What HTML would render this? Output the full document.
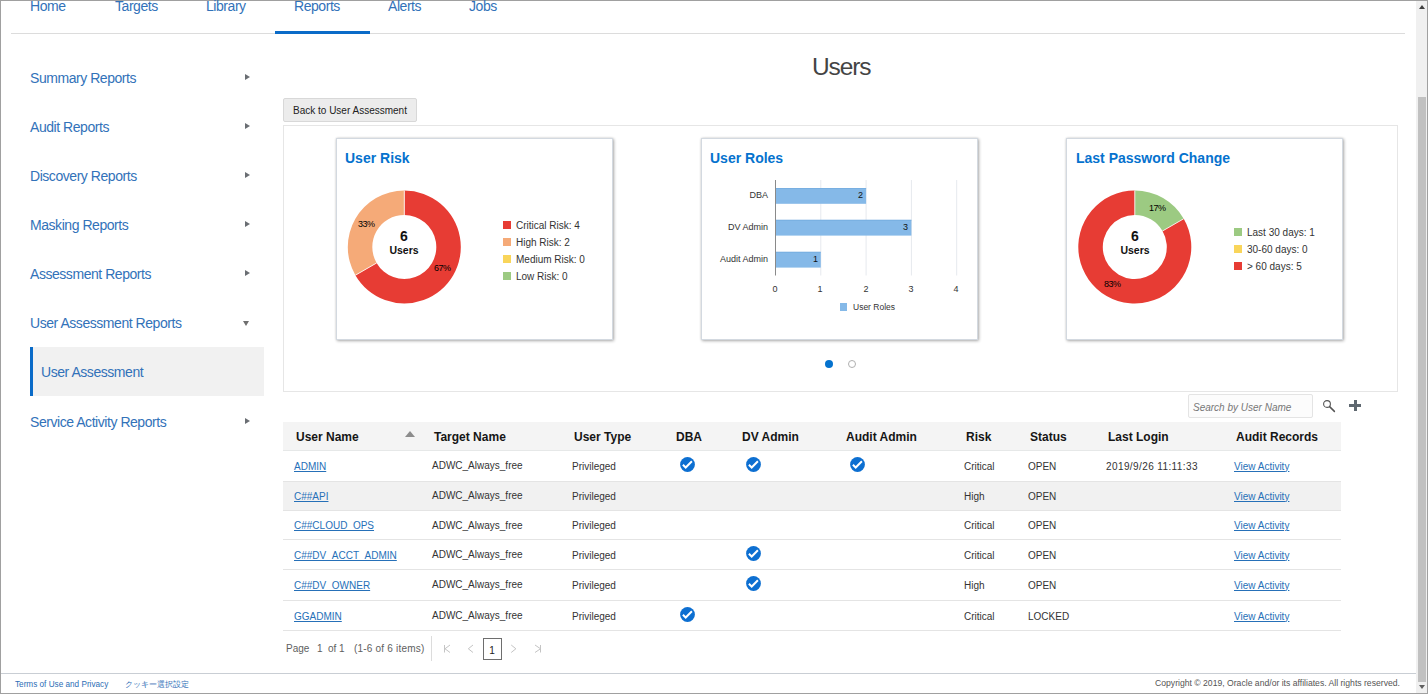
<!DOCTYPE html>
<html><head><meta charset="utf-8"><title>Users</title>
<style>
html,body{margin:0;padding:0;}
body{width:1428px;height:694px;position:relative;overflow:hidden;background:#fff;font-family:"Liberation Sans",sans-serif;color:#333;}
.a{position:absolute;white-space:nowrap;line-height:1;}
.tab{font-size:14px;letter-spacing:-0.45px;color:#3272b9;top:-1px;}
.nav{font-size:14px;letter-spacing:-0.45px;color:#3272b9;left:30px;}
.arr{position:absolute;left:245px;width:0;height:0;border-top:3.5px solid transparent;border-bottom:3.5px solid transparent;border-left:5px solid #6a6e73;}
.card{position:absolute;top:138px;width:275px;height:200px;border:1px solid #d3d9e0;background:#fff;box-shadow:0 0 2px rgba(0,0,0,0.12),1px 1px 3px rgba(0,0,0,0.3);}
.ctitle{font-size:14px;font-weight:bold;color:#0572ce;}
.leg{font-size:10px;color:#333;}
.sq{position:absolute;width:8px;height:8px;}
.th{font-size:12px;font-weight:bold;color:#161616;}
.td{font-size:10px;color:#333;}
.lnk{color:#2670b8;text-decoration:underline;}
.pg{font-size:10px;color:#606060;}
</style></head><body>
<!-- frame -->
<div class="a" style="left:0;top:0;width:1428px;height:1px;background:#a0a0a0"></div>
<div class="a" style="left:0;top:0;width:1px;height:694px;background:#a0a0a0"></div>
<div class="a" style="left:0;top:693px;width:1428px;height:1px;background:#a0a0a0"></div>
<div class="a" style="left:1427px;top:0;width:1px;height:694px;background:#a0a0a0"></div>
<!-- scrollbar -->
<div class="a" style="left:1416px;top:1px;width:11px;height:692px;background:#f0f0f0"></div>
<div class="a" style="left:1418px;top:97px;width:8px;height:585px;background:#c1c1c1"></div>
<div class="a" style="left:1419px;top:5px;width:0;height:0;border-left:3px solid transparent;border-right:3px solid transparent;border-bottom:4px solid #404040"></div>
<div class="a" style="left:1419px;top:685px;width:0;height:0;border-left:3px solid transparent;border-right:3px solid transparent;border-top:4px solid #606060"></div>

<!-- tabs -->
<div class="a tab" style="left:30px">Home</div>
<div class="a tab" style="left:115px">Targets</div>
<div class="a tab" style="left:206px">Library</div>
<div class="a tab" style="left:294px">Reports</div>
<div class="a tab" style="left:388px">Alerts</div>
<div class="a tab" style="left:469px">Jobs</div>
<div class="a" style="left:11px;top:33px;width:1394px;height:1px;background:#dcdcdc"></div>
<div class="a" style="left:275px;top:31px;width:95px;height:3px;background:#0a6bc8"></div>

<!-- left nav -->
<div class="a nav" style="top:71px">Summary Reports</div><div class="arr" style="top:74px"></div>
<div class="a nav" style="top:120px">Audit Reports</div><div class="arr" style="top:123px"></div>
<div class="a nav" style="top:169px">Discovery Reports</div><div class="arr" style="top:172px"></div>
<div class="a nav" style="top:218px">Masking Reports</div><div class="arr" style="top:221px"></div>
<div class="a nav" style="top:267px">Assessment Reports</div><div class="arr" style="top:270px"></div>
<div class="a nav" style="top:316px">User Assessment Reports</div><div class="a" style="left:243px;top:321px;width:0;height:0;border-left:3.5px solid transparent;border-right:3.5px solid transparent;border-top:5px solid #6f6f6f"></div>
<div class="a" style="left:30px;top:347px;width:234px;height:49px;background:#f1f1f1"></div>
<div class="a" style="left:30px;top:347px;width:3px;height:49px;background:#0a6bc8"></div>
<div class="a nav" style="top:365px;left:41px">User Assessment</div>
<div class="a nav" style="top:415px">Service Activity Reports</div><div class="arr" style="top:418px"></div>

<!-- title -->
<div class="a" style="left:812px;top:55px;font-size:24.5px;letter-spacing:-1.1px;color:#444">Users</div>

<!-- button -->
<div class="a" style="left:283px;top:98px;width:132px;height:22px;border:1px solid #d8d8d8;border-radius:2px;background:#ececec"></div>
<div class="a" style="left:293px;top:106px;font-size:10px;color:#222">Back to User Assessment</div>

<!-- panel -->
<div class="a" style="left:283px;top:125px;width:1113px;height:265px;border:1px solid #e6e6e6"></div>

<!-- cards -->
<div class="card" style="left:336px"></div>
<div class="card" style="left:701px"></div>
<div class="card" style="left:1066px"></div>
<div class="a ctitle" style="left:345px;top:151px">User Risk</div>
<div class="a ctitle" style="left:710px;top:151px">User Roles</div>
<div class="a ctitle" style="left:1076px;top:151px">Last Password Change</div>

<!--CHARTS-->
<svg class="a" style="left:0;top:0" width="1428" height="694" viewBox="0 0 1428 694"><path d="M404.30 190.50A56.5 56.5 0 1 1 355.37 275.25L376.59 263.00A32.0 32.0 0 1 0 404.30 215.00Z" fill="#e73c34"/><path d="M355.37 275.25A56.5 56.5 0 0 1 404.30 190.50L404.30 215.00A32.0 32.0 0 0 0 376.59 263.00Z" fill="#f5aa78"/><line x1="404.30" y1="190.50" x2="404.30" y2="215.00" stroke="#fff" stroke-width="0.8"/><line x1="355.37" y1="275.25" x2="376.59" y2="263.00" stroke="#fff" stroke-width="0.8"/><path d="M1134.80 190.50A56.5 56.5 0 0 1 1183.73 218.75L1162.51 231.00A32.0 32.0 0 0 0 1134.80 215.00Z" fill="#9cca82"/><path d="M1183.73 218.75A56.5 56.5 0 1 1 1134.80 190.50L1134.80 215.00A32.0 32.0 0 1 0 1162.51 231.00Z" fill="#e73c34"/><line x1="1134.80" y1="190.50" x2="1134.80" y2="215.00" stroke="#fff" stroke-width="0.8"/><line x1="1183.73" y1="218.75" x2="1162.51" y2="231.00" stroke="#fff" stroke-width="0.8"/><line x1="820.8" y1="180" x2="820.8" y2="275.5" stroke="#e6e9ee" stroke-width="1"/><line x1="866.1" y1="180" x2="866.1" y2="275.5" stroke="#e6e9ee" stroke-width="1"/><line x1="911.4" y1="180" x2="911.4" y2="275.5" stroke="#e6e9ee" stroke-width="1"/><line x1="956.7" y1="180" x2="956.7" y2="275.5" stroke="#e6e9ee" stroke-width="1"/><rect x="775.5" y="188" width="90.6" height="15.8" fill="#85b9e8"/><rect x="775.5" y="188" width="90.6" height="1" fill="#6fa8dc" opacity="0.6"/><rect x="775.5" y="219.8" width="135.9" height="15.8" fill="#85b9e8"/><rect x="775.5" y="219.8" width="135.9" height="1" fill="#6fa8dc" opacity="0.6"/><rect x="775.5" y="251.8" width="45.3" height="15.8" fill="#85b9e8"/><rect x="775.5" y="251.8" width="45.3" height="1" fill="#6fa8dc" opacity="0.6"/><line x1="775.5" y1="180" x2="775.5" y2="275.5" stroke="#8a8a8a" stroke-width="1"/></svg>
<!-- donut 1 text -->
<div class="a" style="left:374px;top:229px;width:60px;text-align:center;font-size:14px;font-weight:bold;color:#111">6</div>
<div class="a" style="left:374px;top:245px;width:60px;text-align:center;font-size:10.5px;font-weight:bold;color:#111">Users</div>
<div class="a" style="left:358px;top:220px;font-size:9px;color:#000;letter-spacing:-0.5px">33%</div>
<div class="a" style="left:434px;top:264px;font-size:9px;color:#000;letter-spacing:-0.5px">67%</div>
<div class="sq" style="left:503px;top:221px;background:#e73c34"></div>
<div class="sq" style="left:503px;top:238px;background:#f5aa78"></div>
<div class="sq" style="left:503px;top:255px;background:#f9d55a"></div>
<div class="sq" style="left:503px;top:272px;background:#9cca82"></div>
<div class="a leg" style="left:516px;top:220.5px">Critical Risk: 4</div>
<div class="a leg" style="left:516px;top:238px">High Risk: 2</div>
<div class="a leg" style="left:516px;top:255px">Medium Risk: 0</div>
<div class="a leg" style="left:516px;top:272px">Low Risk: 0</div>
<!-- donut 3 text -->
<div class="a" style="left:1105px;top:229px;width:60px;text-align:center;font-size:14px;font-weight:bold;color:#111">6</div>
<div class="a" style="left:1105px;top:245px;width:60px;text-align:center;font-size:10.5px;font-weight:bold;color:#111">Users</div>
<div class="a" style="left:1149px;top:204px;font-size:9px;color:#000;letter-spacing:-0.5px">17%</div>
<div class="a" style="left:1104px;top:280px;font-size:9px;color:#000;letter-spacing:-0.5px">83%</div>
<div class="sq" style="left:1234px;top:228px;background:#9cca82"></div>
<div class="sq" style="left:1234px;top:245px;background:#f9d55a"></div>
<div class="sq" style="left:1234px;top:262px;background:#e73c34"></div>
<div class="a leg" style="left:1247px;top:228px">Last 30 days: 1</div>
<div class="a leg" style="left:1247px;top:245px">30-60 days: 0</div>
<div class="a leg" style="left:1247px;top:262px">&gt; 60 days: 5</div>
<!-- bar chart text -->
<div class="a" style="left:700px;top:191px;width:68px;text-align:right;font-size:9px;color:#333">DBA</div>
<div class="a" style="left:700px;top:223px;width:68px;text-align:right;font-size:9px;color:#333">DV Admin</div>
<div class="a" style="left:700px;top:255px;width:68px;text-align:right;font-size:9px;color:#333">Audit Admin</div>
<div class="a" style="left:850px;top:191px;width:13px;text-align:right;font-size:9px;color:#111">2</div>
<div class="a" style="left:895px;top:223px;width:13px;text-align:right;font-size:9px;color:#111">3</div>
<div class="a" style="left:805px;top:255px;width:13px;text-align:right;font-size:9px;color:#111">1</div>
<div class="a" style="left:765px;top:285px;width:20px;text-align:center;font-size:9px;color:#333">0</div>
<div class="a" style="left:810px;top:285px;width:20px;text-align:center;font-size:9px;color:#333">1</div>
<div class="a" style="left:856px;top:285px;width:20px;text-align:center;font-size:9px;color:#333">2</div>
<div class="a" style="left:901px;top:285px;width:20px;text-align:center;font-size:9px;color:#333">3</div>
<div class="a" style="left:946px;top:285px;width:20px;text-align:center;font-size:9px;color:#333">4</div>
<div class="sq" style="left:840px;top:303px;width:7px;background:#85b9e8"></div>
<div class="a" style="left:853px;top:303px;font-size:8.5px;color:#333">User Roles</div>
<!--/CHARTS-->

<!-- dots -->
<div class="a" style="left:825px;top:360px;width:8px;height:8px;border-radius:50%;background:#0572ce"></div>
<div class="a" style="left:848px;top:360px;width:6px;height:6px;border-radius:50%;border:1px solid #b0b0b0"></div>

<!--TABLE-->
<div class="a" style="left:1188px;top:394px;width:123px;height:22px;border:1px solid #e4e4e4;border-radius:2px;background:#fcfcfc"></div>
<div class="a" style="left:1193px;top:403px;font-size:10px;font-style:italic;color:#777">Search by User Name</div>
<svg class="a" style="left:1320px;top:397px" width="18" height="18" viewBox="0 0 18 18"><circle cx="7" cy="7" r="3.4" fill="none" stroke="#555" stroke-width="1.1"/><line x1="9.6" y1="9.6" x2="14.4" y2="14.4" stroke="#555" stroke-width="1.5" stroke-linecap="round"/></svg>
<div class="a" style="left:1349px;top:404px;width:12px;height:3px;background:#5f6870"></div>
<div class="a" style="left:1354px;top:400px;width:3px;height:11px;background:#5f6870"></div>
<div class="a" style="left:283px;top:422px;width:1058px;height:28px;background:#f4f4f4"></div>
<div class="a" style="left:283px;top:450px;width:1058px;height:1px;background:#e6e8e8"></div>
<div class="a th" style="left:296px;top:431px">User Name</div>
<div class="a th" style="left:434px;top:431px">Target Name</div>
<div class="a th" style="left:574px;top:431px">User Type</div>
<div class="a th" style="left:676px;top:431px">DBA</div>
<div class="a th" style="left:742px;top:431px">DV Admin</div>
<div class="a th" style="left:846px;top:431px">Audit Admin</div>
<div class="a th" style="left:966px;top:431px">Risk</div>
<div class="a th" style="left:1030px;top:431px">Status</div>
<div class="a th" style="left:1108px;top:431px">Last Login</div>
<div class="a th" style="left:1236px;top:431px">Audit Records</div>
<div class="a" style="left:405px;top:431px;width:0;height:0;border-left:5px solid transparent;border-right:5px solid transparent;border-bottom:6px solid #8c8c8c"></div>
<div class="a" style="left:283px;top:481px;width:1058px;height:1px;background:#e4e4e4"></div>
<div class="a td lnk" style="left:294px;top:461.6px">ADMIN</div>
<div class="a td" style="left:432px;top:461.4px">ADWC_Always_free</div>
<div class="a td" style="left:572px;top:461.6px">Privileged</div>
<svg class="a" style="left:679.8px;top:456.5px" width="15" height="15" viewBox="0 0 15 15"><circle cx="7.5" cy="7.5" r="7.4" fill="#0d6fd1"/><path d="M2.9 7.7L5.7 10.5L11.9 4.3" fill="none" stroke="#fff" stroke-width="2"/></svg>
<svg class="a" style="left:745.8px;top:456.5px" width="15" height="15" viewBox="0 0 15 15"><circle cx="7.5" cy="7.5" r="7.4" fill="#0d6fd1"/><path d="M2.9 7.7L5.7 10.5L11.9 4.3" fill="none" stroke="#fff" stroke-width="2"/></svg>
<svg class="a" style="left:849.9px;top:456.5px" width="15" height="15" viewBox="0 0 15 15"><circle cx="7.5" cy="7.5" r="7.4" fill="#0d6fd1"/><path d="M2.9 7.7L5.7 10.5L11.9 4.3" fill="none" stroke="#fff" stroke-width="2"/></svg>
<div class="a td" style="left:964px;top:461.6px">Critical</div>
<div class="a td" style="left:1028px;top:461.6px">OPEN</div>
<div class="a td" style="left:1106px;top:461.6px;letter-spacing:0.4px">2019/9/26 11:11:33</div>
<div class="a td lnk" style="left:1234px;top:461.6px">View Activity</div>
<div class="a" style="left:283px;top:482px;width:1058px;height:28px;background:#f1f1f1"></div>
<div class="a" style="left:283px;top:510px;width:1058px;height:1px;background:#e4e4e4"></div>
<div class="a td lnk" style="left:294px;top:491.6px">C##API</div>
<div class="a td" style="left:432px;top:491.4px">ADWC_Always_free</div>
<div class="a td" style="left:572px;top:491.6px">Privileged</div>
<div class="a td" style="left:964px;top:491.6px">High</div>
<div class="a td" style="left:1028px;top:491.6px">OPEN</div>
<div class="a td lnk" style="left:1234px;top:491.6px">View Activity</div>
<div class="a" style="left:283px;top:539px;width:1058px;height:1px;background:#e4e4e4"></div>
<div class="a td lnk" style="left:294px;top:521.1px">C##CLOUD_OPS</div>
<div class="a td" style="left:432px;top:520.9px">ADWC_Always_free</div>
<div class="a td" style="left:572px;top:521.1px">Privileged</div>
<div class="a td" style="left:964px;top:521.1px">Critical</div>
<div class="a td" style="left:1028px;top:521.1px">OPEN</div>
<div class="a td lnk" style="left:1234px;top:521.1px">View Activity</div>
<div class="a" style="left:283px;top:569px;width:1058px;height:1px;background:#e4e4e4"></div>
<div class="a td lnk" style="left:294px;top:550.6px">C##DV_ACCT_ADMIN</div>
<div class="a td" style="left:432px;top:550.4px">ADWC_Always_free</div>
<div class="a td" style="left:572px;top:550.6px">Privileged</div>
<svg class="a" style="left:745.8px;top:545.5px" width="15" height="15" viewBox="0 0 15 15"><circle cx="7.5" cy="7.5" r="7.4" fill="#0d6fd1"/><path d="M2.9 7.7L5.7 10.5L11.9 4.3" fill="none" stroke="#fff" stroke-width="2"/></svg>
<div class="a td" style="left:964px;top:550.6px">Critical</div>
<div class="a td" style="left:1028px;top:550.6px">OPEN</div>
<div class="a td lnk" style="left:1234px;top:550.6px">View Activity</div>
<div class="a" style="left:283px;top:600px;width:1058px;height:1px;background:#e4e4e4"></div>
<div class="a td lnk" style="left:294px;top:580.6px">C##DV_OWNER</div>
<div class="a td" style="left:432px;top:580.4px">ADWC_Always_free</div>
<div class="a td" style="left:572px;top:580.6px">Privileged</div>
<svg class="a" style="left:745.8px;top:575.5px" width="15" height="15" viewBox="0 0 15 15"><circle cx="7.5" cy="7.5" r="7.4" fill="#0d6fd1"/><path d="M2.9 7.7L5.7 10.5L11.9 4.3" fill="none" stroke="#fff" stroke-width="2"/></svg>
<div class="a td" style="left:964px;top:580.6px">High</div>
<div class="a td" style="left:1028px;top:580.6px">OPEN</div>
<div class="a td lnk" style="left:1234px;top:580.6px">View Activity</div>
<div class="a" style="left:283px;top:630px;width:1058px;height:1px;background:#e4e4e4"></div>
<div class="a td lnk" style="left:294px;top:611.6px">GGADMIN</div>
<div class="a td" style="left:432px;top:611.4px">ADWC_Always_free</div>
<div class="a td" style="left:572px;top:611.6px">Privileged</div>
<svg class="a" style="left:679.8px;top:606.5px" width="15" height="15" viewBox="0 0 15 15"><circle cx="7.5" cy="7.5" r="7.4" fill="#0d6fd1"/><path d="M2.9 7.7L5.7 10.5L11.9 4.3" fill="none" stroke="#fff" stroke-width="2"/></svg>
<div class="a td" style="left:964px;top:611.6px">Critical</div>
<div class="a td" style="left:1028px;top:611.6px">LOCKED</div>
<div class="a td lnk" style="left:1234px;top:611.6px">View Activity</div>
<div class="a pg" style="left:286px;top:644px">Page</div>
<div class="a pg" style="left:317px;top:644px">1</div>
<div class="a pg" style="left:328px;top:644px">of 1</div>
<div class="a pg" style="left:354px;top:644px;letter-spacing:0.2px">(1-6 of 6 items)</div>
<div class="a" style="left:431px;top:636px;width:1px;height:25px;background:#dcdcdc"></div>
<svg class="a" style="left:440px;top:640px" width="110" height="18" viewBox="0 0 110 18"><path d="M4.5 5V12.5M10 5L5 8.75L10 12.5" fill="none" stroke="#c4c4c4" stroke-width="1"/><path d="M33 5L28.3 8.75L33 12.5" fill="none" stroke="#c4c4c4" stroke-width="1"/><path d="M71.2 5L75.9 8.75L71.2 12.5" fill="none" stroke="#c4c4c4" stroke-width="1"/><path d="M95 5L100.5 8.75L95 12.5M100.5 5V12.5" fill="none" stroke="#c4c4c4" stroke-width="1"/></svg>
<div class="a" style="left:483px;top:638px;width:17px;height:20px;border:1px solid #6e6e6e;background:#fff"></div>
<div class="a" style="left:482px;top:645.5px;width:20px;text-align:center;font-size:10px;color:#222">1</div>
<!--/TABLE-->

<!--FOOTER-->
<div class="a" style="left:1px;top:673px;width:1415px;height:1px;background:#c9ced4"></div>
<div class="a" style="left:15px;top:681px;font-size:8.2px;color:#2d6db5">Terms of Use and Privacy</div>
<div class="a" style="left:125px;top:681px;font-size:8.2px;color:#2d6db5">クッキー選択設定</div>
<div class="a" style="left:1155px;top:679px;font-size:8.65px;color:#555">Copyright © 2019, Oracle and/or its affiliates. All rights reserved.</div>
<!--/FOOTER-->
</body></html>
